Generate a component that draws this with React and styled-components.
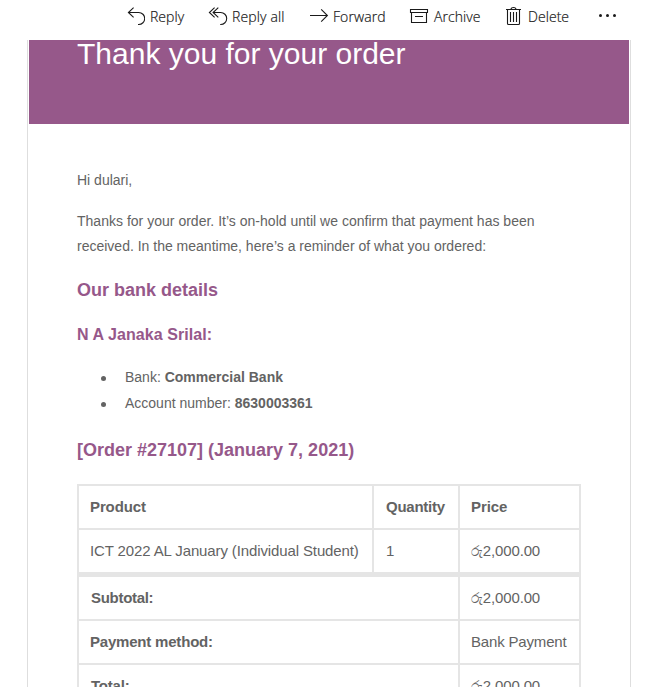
import React from "react";
import styled, { createGlobalStyle } from "styled-components";

const GlobalStyle = createGlobalStyle`
  * { box-sizing: border-box; }
  html, body { margin: 0; background: #fff; overflow: hidden; }
`;

const Window = styled.div`
  width: 665px;
  height: 688px;
  overflow: hidden;
  background: #fff;
  border-bottom: 1px solid #fff;
  font-family: "Liberation Sans", Arial, sans-serif;
`;

const Toolbar = styled.div`
  display: flex;
  height: 40px;
  padding: 2px 0 8px 127px;
`;

const Action = styled.div`
  display: flex;
  flex: none;
  align-items: center;
  width: ${(p) => p.$width}px;
  gap: ${(p) => p.$gap ?? 4}px;
  color: #1a1a1a;
  font: 300 14px/20px "Open Sans", "Noto Sans", sans-serif;
  letter-spacing: ${(p) => p.$spacing ?? 0}px;
  white-space: nowrap;
  -webkit-text-stroke: 0.2px #1a1a1a;
`;

const Icon = styled.svg`
  display: block;
  flex: none;
  fill: none;
  stroke: #1a1a1a;
  stroke-width: 1.1;
`;

const Email = styled.main`
  width: 604px;
  height: 648px;
  margin-left: 27px;
  border: solid #dedede;
  border-width: 0 1px;
  padding: 0 1px;
`;

const Banner = styled.header`
  width: 600px;
  height: 84px;
  padding-left: 48px;
  background: #96588a;
`;

const Title = styled.h1`
  margin: 0;
  color: #fff;
  font-size: 30px;
  font-weight: 400;
  line-height: 28px;
  white-space: nowrap;
`;

const Body = styled.div`
  padding: 44px 48px 0;
  color: #636363;
`;

const Line = styled.p`
  margin: 0;
  height: ${(p) => p.$height}px;
  font-size: 14px;
  line-height: 25px;
  white-space: nowrap;
  letter-spacing: ${(p) => p.$spacing ?? 0}px;
`;

const Heading = styled.h2`
  margin: 0;
  height: ${(p) => p.$height}px;
  color: #96588a;
  font-size: ${(p) => p.$size ?? 18}px;
  font-weight: 700;
  line-height: 24px;
  white-space: nowrap;
  letter-spacing: ${(p) => p.$spacing ?? 0}px;
`;

const Details = styled.ul`
  margin: 0;
  padding: 0 0 0 24px;
  height: 74px;
  list-style: none;
`;

const Detail = styled.li`
  display: flex;
  align-items: center;
  height: 26px;
  gap: 19px;
  font-size: 14px;
  line-height: 26px;
  white-space: nowrap;
  &::before {
    content: "";
    width: 5px;
    height: 5px;
    margin-top: 3px;
    border-radius: 50%;
    background: #636363;
  }
`;

const Table = styled.div`
  width: 504px;
  border: solid #e5e5e5;
  border-width: 2px 2px 0;
`;

const Row = styled.div`
  display: flex;
  height: ${(p) => (p.$thick ? 47 : 44)}px;
  border-bottom: ${(p) => (p.$thick ? 5 : 2)}px solid #e5e5e5;
`;

const Cell = styled.div`
  flex: none;
  width: ${(p) => p.$width}px;
  padding-left: ${(p) => p.$inset ?? 11}px;
  border-right: ${(p) => (p.$last ? 0 : 2)}px solid #e5e5e5;
  font-size: 15px;
  font-weight: ${(p) => (p.$bold ? 700 : 400)};
  line-height: 42px;
  white-space: nowrap;
  letter-spacing: ${(p) => p.$spacing ?? 0}px;
`;

const Currency = styled.span`
  font-size: 14px;
`;

function Price({ children }) {
  return (
    <Cell $width={119} $last $spacing={-0.15}>
      <Currency>රු</Currency>
      {children}
    </Cell>
  );
}

export default function App() {
  return (
    <Window>
      <GlobalStyle />
      <Toolbar>
        <Action $width={81} $gap={5} $spacing={0.05}>
          <Icon width="18" height="20" viewBox="0 0 18 20"><path d="M6.6.7 1.4 5.5l5.2 4.8M1.4 5.5h10.3a6 6 0 0 1 0 12h-.7" /></Icon>
          Reply
        </Action>
        <Action $width={101} $spacing={0.14}>
          <Icon width="20" height="20" viewBox="0 0 20 20"><path d="M6.6.7 1.4 5.5l5.2 4.8M10.3.7 5.1 5.5l5.2 4.8M5.1 5.5h7.6a6 6 0 0 1 0 12h-.5" /></Icon>
          Reply all
        </Action>
        <Action $width={100} $spacing={0.08}>
          <Icon width="20" height="20" viewBox="0 0 20 20"><path d="M1 8.5h17.4M12.2 2.4l6.2 6.1-6.2 6.1" /></Icon>
          Forward
        </Action>
        <Action $width={96} $gap={5} $spacing={0.05}>
          <Icon width="20" height="20" viewBox="0 0 20 20"><path d="M1.5 2.5h17v3h-17zM2.5 5.5v10h15v-10M6 9.5h8" /></Icon>
          Archive
        </Action>
        <Action $width={92} $gap={5} $spacing={0.05}>
          <Icon width="18" height="20" viewBox="0 0 18 20"><path d="M1 2.5h15M6 2.5c0-2.6 5-2.6 5 0M2.5 2.5v14q0 1 1 1h10q1 0 1-1v-14M5.5 5v10M8.5 5v10M11.5 5v10" /></Icon>
          Delete
        </Action>
        <Icon width="22" height="28" viewBox="0 0 22 28"><g fill="#1a1a1a" stroke="none"><circle cx="3.5" cy="13.5" r="1.5" /><circle cx="10.5" cy="13.5" r="1.5" /><circle cx="17.5" cy="13.5" r="1.5" /></g></Icon>
      </Toolbar>
      <Email>
        <Banner><Title>Thank you for your order</Title></Banner>
        <Body>
          <Line $height={41}>Hi dulari,</Line>
          <Line $height={25} $spacing={0.014}>Thanks for your order. It’s on-hold until we confirm that payment has been</Line>
          <Line $height={44}>received. In the meantime, here’s a reminder of what you ordered:</Line>
          <Heading $height={45}>Our bank details</Heading>
          <Heading $height={41} $size={16} $spacing={0.06}>N A Janaka Srilal:</Heading>
          <Details>
            <Detail><span>Bank: <b>Commercial Bank</b></span></Detail>
            <Detail><span>Account number: <b>8630003361</b></span></Detail>
          </Details>
          <Heading $height={46}>[Order #27107] (January 7, 2021)</Heading>
          <Table>
            <Row>
              <Cell $width={295} $spacing={-0.12} $bold>Product</Cell>
              <Cell $width={86} $inset={12} $spacing={-0.25} $bold>Quantity</Cell>
              <Cell $width={119} $last $bold $spacing={-0.1}>Price</Cell>
            </Row>
            <Row $thick>
              <Cell $width={295} $spacing={-0.12}>ICT 2022 AL January (Individual Student)</Cell>
              <Cell $width={86} $inset={12}>1</Cell>
              <Price>2,000.00</Price>
            </Row>
            <Row>
              <Cell $width={381} $inset={12} $bold $spacing={-0.3}>Subtotal:</Cell>
              <Price>2,000.00</Price>
            </Row>
            <Row>
              <Cell $width={381} $bold $spacing={-0.2}>Payment method:</Cell>
              <Cell $width={119} $last $spacing={-0.17}>Bank Payment</Cell>
            </Row>
            <Row>
              <Cell $width={381} $inset={12} $bold $spacing={-0.2}>Total:</Cell>
              <Price>2,000.00</Price>
            </Row>
          </Table>
        </Body>
      </Email>
    </Window>
  );
}
